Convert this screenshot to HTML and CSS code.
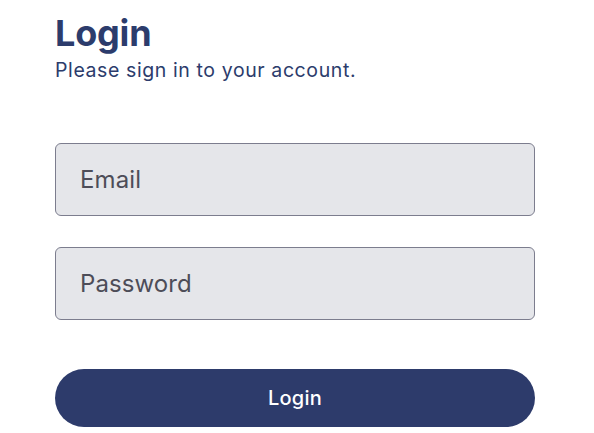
FILE: index.html
```html
<!DOCTYPE html>
<html>
<head>
<meta charset="utf-8">
<link rel="stylesheet" href="styles.css">
</head>
<body>
<main class="login">
  <header class="login-header">
    <h1 class="title">Login</h1>
    <p class="subtitle">Please sign in to your account.</p>
  </header>
  <form class="form">
    <input class="field" type="email" placeholder="Email">
    <input class="field" type="password" placeholder="Password">
    <button class="btn" type="button">Login</button>
  </form>
</main>
</body>
</html>
```

FILE: styles.css
```css
* { box-sizing: border-box; }
html, body { margin: 0; padding: 0; background: #ffffff; }
body { font-family: Inter, "Noto Sans", sans-serif; }
.login {
  width: 480px;
  margin-left: 55px;
  padding-top: 11px;
  display: flex;
  flex-direction: column;
}
.title {
  margin: 0;
  font-size: 36px;
  font-weight: 700;
  color: #2c3c6c;
  line-height: 44px;
  letter-spacing: -0.2px;
}
.subtitle {
  margin: 3px 0 0;
  font-size: 19.5px;
  color: #2c3c6c;
  line-height: 24px;
  letter-spacing: 0.6px;
}
.form {
  margin-top: 61px;
  display: flex;
  flex-direction: column;
}
.field {
  height: 73px;
  width: 100%;
  border: 1.7px solid #7c7d8e;
  border-radius: 6px;
  background: #e5e6ea;
  padding: 0 24px;
  font-family: inherit;
  font-size: 24px;
  color: #4a4a55;
  margin-bottom: 31px;
  outline: none;
}
.field::placeholder { color: #4d4d58; opacity: 1; letter-spacing: 0.1px; }
.btn {
  margin-top: 18px;
  height: 58px;
  width: 100%;
  border: none;
  border-radius: 29px;
  background: #2d3b6b;
  color: #ffffff;
  font-family: inherit;
  font-size: 20px;
  font-weight: 500;
  letter-spacing: 0.2px;
}
```
